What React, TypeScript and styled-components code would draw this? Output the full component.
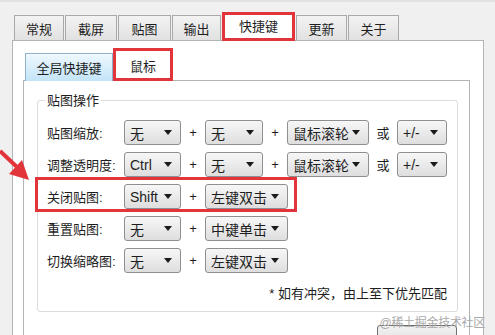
import * as React from "react";
import styled, { createGlobalStyle, css } from "styled-components";

const RED = "#e2353b";

const GlobalStyle = createGlobalStyle`
    html, body {
        margin: 0;
        padding: 0;
        background: #f0f0f0;
    }
    body {
        font-family: "Liberation Sans", "Noto Sans CJK SC", sans-serif;
        font-size: 13px;
        color: #1e1e1e;
    }
`

const Page = styled.div`
    position: relative;
    width: 495px;
    height: 335px;
    overflow: hidden;
    box-sizing: border-box;
    padding: 11px 0 0 12px;
    background: #f0f0f0;
    border-top: 2px solid #e2e2e2;
`

const TabBar = styled.div`
    display: flex;
    align-items: flex-end;
    height: 27px;
    padding-left: 2px;
`

const Tab = styled.div<{ $w: number; $active?: boolean }>`
    position: relative;
    z-index: 1;
    box-sizing: border-box;
    width: ${(p) => p.$w}px;
    height: 25px;
    margin-right: 1px;
    display: flex;
    align-items: center;
    justify-content: center;
    border: 1px solid #a9a9a9;
    border-bottom: none;
    background: linear-gradient(#f3f3f3, #e1e1e1);
    font-size: 13px;
    ${(p) => p.$active && css`
        height: 29px;
        margin-bottom: -1px;
        background: #fff;
        border: 3px solid ${RED};
        border-bottom: 3px solid ${RED};
        padding-bottom: 2px;
    `}
`

const MainPanel = styled.div`
    box-sizing: border-box;
    width: 472px;
    height: 320px;
    border: 1px solid #b4b4b4;
    background: #fff;
    padding: 7px 0 0 10px;
`

const SubTabBar = styled.div`
    display: flex;
    align-items: flex-end;
    height: 32px;
    padding-left: 2px;
`

const SubTab = styled.div<{ $w: number; $active?: boolean }>`
    position: relative;
    z-index: 1;
    box-sizing: border-box;
    width: ${(p) => p.$w}px;
    height: 28px;
    margin-bottom: -1px;
    display: flex;
    align-items: center;
    justify-content: center;
    border: 1px solid #8fb1cc;
    border-bottom: none;
    background: linear-gradient(#eef8fe, #c3e4f8);
    font-size: 13px;
    ${(p) => p.$active && css`
        height: 33px;
        background: #fff;
        border: 3px solid ${RED};
        padding-top: 1px;
    `}
`

const SubPanel = styled.div`
    box-sizing: border-box;
    width: 447px;
    height: 260px;
    border: 1px solid #b4b4b4;
    padding: 11px 12px 0 13px;
`

const Group = styled.fieldset`
    margin: 0;
    width: 421px;
    box-sizing: border-box;
    border: 1px solid #dcdcdc;
    border-radius: 3px;
    padding: 11px 10px 9px 9px;
    display: flex;
    flex-direction: column;
    gap: 7px;

    legend {
        padding: 0 2px;
        margin-left: -2px;
        line-height: 17px;
        font-size: 13px;
    }
`

const Row = styled.div<{ $marked?: boolean }>`
    position: relative;
    display: flex;
    align-items: center;
    height: 25px;
    ${(p) => p.$marked && css`
        &::before {
            content: "";
            position: absolute;
            top: -7px;
            bottom: -3px;
            left: -12px;
            width: 256px;
            border: 3px solid ${RED};
        }
    `}
`

const Label = styled.span`
    width: 77px;
    white-space: nowrap;
`

const Combo = styled.div<{ $w: number }>`
    box-sizing: border-box;
    width: ${(p) => p.$w}px;
    height: 25px;
    display: flex;
    align-items: center;
    justify-content: space-between;
    padding: 0 8px 0 5px;
    border: 1px solid #8e8f8f;
    border-radius: 3px;
    background: linear-gradient(#f7f7f7, #dedede);
    font-size: 14px;

    &::after {
        content: "";
        border-left: 4px solid transparent;
        border-right: 4px solid transparent;
        border-top: 5px solid #1a1a1a;
    }
`

const Joiner = styled.span<{ $w: number }>`
    width: ${(p) => p.$w}px;
    text-align: center;
`

const Note = styled.div`
    margin-top: 5px;
    text-align: right;
    line-height: 17px;
`

const ButtonRow = styled.div`
    display: flex;
    justify-content: flex-end;
    margin-top: 13px;
`

const Button = styled.div`
    width: 80px;
    height: 23px;
    box-sizing: border-box;
    border: 1px solid #707070;
    border-radius: 3px;
    background: linear-gradient(#f2f2f2, #dddddd);
`

const Watermark = styled.div`
    position: absolute;
    right: 10px;
    bottom: 5px;
    font-size: 12px;
    color: #a9a9a9;
    letter-spacing: -0.3px;
`

const Arrow = styled.svg`
    position: absolute;
    left: 0;
    top: 146px;
`

const Plus = () => <Joiner $w={24}>+</Joiner>

const rows = [
    { label: "贴图缩放:", a: "无", b: "无", wheel: true },
    { label: "调整透明度:", a: "Ctrl", b: "无", wheel: true },
    { label: "关闭贴图:", a: "Shift", b: "左键双击", marked: true },
    { label: "重置贴图:", a: "无", b: "中键单击" },
    { label: "切换缩略图:", a: "无", b: "左键双击" },
]

export default function App() {
    return (
        <>
            <GlobalStyle />
            <Page>
                <TabBar>
                    <Tab $w={50}>常规</Tab>
                    <Tab $w={52}>截屏</Tab>
                    <Tab $w={53}>贴图</Tab>
                    <Tab $w={49}>输出</Tab>
                    <Tab $w={73} $active>快捷键</Tab>
                    <Tab $w={51}>更新</Tab>
                    <Tab $w={51}>关于</Tab>
                </TabBar>
                <MainPanel>
                    <SubTabBar>
                        <SubTab $w={88}>全局快捷键</SubTab>
                        <SubTab $w={60} $active>鼠标</SubTab>
                    </SubTabBar>
                    <SubPanel>
                        <Group>
                            <legend>贴图操作</legend>
                            {rows.map((r, i) => (
                                <Row key={i} $marked={r.marked}>
                                    <Label>{r.label}</Label>
                                    <Combo $w={57}>{r.a}</Combo>
                                    <Plus />
                                    {r.wheel ? (
                                        <>
                                            <Combo $w={58}>{r.b}</Combo>
                                            <Plus />
                                            <Combo $w={82}>鼠标滚轮</Combo>
                                            <Joiner $w={28}>或</Joiner>
                                            <Combo $w={50}>+/-</Combo>
                                        </>
                                    ) : (
                                        <Combo $w={83}>{r.b}</Combo>
                                    )}
                                </Row>
                            ))}
                            <Note>* 如有冲突，由上至下优先匹配</Note>
                        </Group>
                        <ButtonRow>
                            <Button />
                        </ButtonRow>
                    </SubPanel>
                </MainPanel>
                <Arrow width="36" height="40" viewBox="0 0 36 40">
                    <line x1="0" y1="3" x2="18" y2="20" stroke={RED} strokeWidth="4" />
                    <polygon points="29,32 9,26 22,12" fill={RED} />
                </Arrow>
                <Watermark>@稀土掘金技术社区</Watermark>
            </Page>
        </>
    );
}
